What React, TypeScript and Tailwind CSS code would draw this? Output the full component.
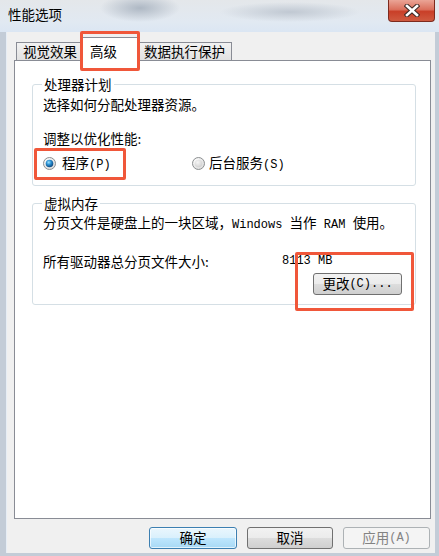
import type { ReactNode } from "react";

const cjk = "font-['Noto_Sans_CJK_SC',sans-serif]";
const Lat = ({ children }: { children: ReactNode }) => (
  <span className="font-['Liberation_Mono',monospace] text-[12px]">{children}</span>
);

const Radio = ({ checked }: { checked?: boolean }) => (
  <svg width="13" height="13" viewBox="0 0 13 13" className="shrink-0">
    <defs>
      <radialGradient id="ro" cx="0.35" cy="0.3" r="0.8">
        <stop offset="0" stopColor="#ffffff" />
        <stop offset="1" stopColor="#d9d9d9" />
      </radialGradient>
      <radialGradient id="rc" cx="0.4" cy="0.35" r="0.7">
        <stop offset="0" stopColor="#9ee3ff" />
        <stop offset="0.45" stopColor="#2a8ed0" />
        <stop offset="1" stopColor="#0b3f73" />
      </radialGradient>
      <radialGradient id="ru" cx="0.4" cy="0.35" r="0.7">
        <stop offset="0" stopColor="#f6f6f6" />
        <stop offset="1" stopColor="#cfcfcf" />
      </radialGradient>
    </defs>
    <circle cx="6.5" cy="6.5" r="6" fill="url(#ro)" stroke="#8c8f91" />
    <circle cx="6.5" cy="6.5" r="3.8" fill={checked ? "url(#rc)" : "url(#ru)"} />
  </svg>
);

const Btn = ({
  children,
  primary,
  disabled,
  className = "",
}: {
  children: ReactNode;
  primary?: boolean;
  disabled?: boolean;
  className?: string;
}) => {
  let look =
    "border-[#707070] bg-[linear-gradient(#f2f2f2_0%,#ebebeb_50%,#dddddd_51%,#cfcfcf_100%)] text-black";
  if (primary)
    look =
      "border-[#3c7fb1] bg-[linear-gradient(#eaf6fd_0%,#d9f0fc_50%,#bee6fd_51%,#a7d9f5_100%)] text-black shadow-[inset_0_0_0_1px_#ffffffaa]";
  if (disabled) look = "border-[#adb2b5] bg-[#f4f4f4] text-[#838383]";
  return (
    <div
      className={`shrink-0 h-[22px] border rounded-[3px] flex items-center justify-center text-[13.5px] leading-none ${look} ${className}`}
    >
      {children}
    </div>
  );
};

const Tab = ({ children, active }: { children: ReactNode; active?: boolean }) => (
  <div
    className={
      active
        ? "relative z-10 w-[58px] h-[24px] -mb-px -mx-[2px] pl-[7px] bg-white border border-b-0 border-[#898c95] flex items-start pt-[3px] text-[13.5px]"
        : "h-[18px] px-[6px] bg-[linear-gradient(#f2f2f2,#e1e1e1)] border border-b-0 border-[#898c95] flex items-center text-[13.5px] -ml-px first:ml-0"
    }
  >
    {children}
  </div>
);

export default function App() {
  return (
    <div className={`relative w-[439px] h-[556px] bg-[#c3ccd7] flex flex-col text-black ${cjk}`}>
      {/* title bar */}
      <div className="relative h-[32px] shrink-0 bg-[radial-gradient(ellipse_40px_14px_at_140px_8px,#aeb8c4,transparent),radial-gradient(ellipse_70px_10px_at_290px_12px,#c0c8d2,transparent),linear-gradient(#e4e7ea,#e1e9f2_70%,#dbe6f3)] flex items-center pl-[8px]">
        <span className="text-[13.5px] leading-none mt-[-2px]">性能选项</span>
        <div className="absolute right-[4px] top-0 w-[47px] h-[22px] rounded-b-[4px] border border-t-0 border-[#7d2a1d] bg-[linear-gradient(#eaa496_0%,#db705d_45%,#c93f28_55%,#cf5a40_100%)] flex items-center justify-center">
          <svg width="16" height="13" viewBox="0 0 16 13">
            <path d="M3 2 L13 11 M13 2 L3 11" stroke="#3e2a26" strokeWidth="4.6" strokeLinecap="square" />
            <path d="M3 2 L13 11 M13 2 L3 11" stroke="#ffffff" strokeWidth="2.6" strokeLinecap="square" />
          </svg>
        </div>
      </div>

      {/* client */}
      <div className="flex-1 ml-[6px] mr-[4px] mb-[3px] bg-[#f0f0f0] border-l border-[#e6edf5] flex flex-col pl-[7px] pr-[4px] pt-[5px]">
        <div className="h-[23px] flex items-end pl-[2px]">
          <Tab>视觉效果</Tab>
          <Tab active>高级</Tab>
          <Tab>数据执行保护</Tab>
        </div>

        <div className="flex-1 bg-white border border-[#898c95] pl-[17px] pr-[14px] pt-[14px]">
          <fieldset className="border border-[#d5dfe5] rounded-[3px] pl-[10px] pr-[12px] pb-[11px]">
            <legend className="-ml-[1px] px-[2px] text-[13.5px] leading-[18px]">处理器计划</legend>
            <div className="mt-[2px] text-[13.5px] leading-[18px]">选择如何分配处理器资源。</div>
            <div className="mt-[16px] text-[13.5px] leading-[18px]">调整以优化性能:</div>
            <div className="mt-[6px] flex items-center text-[13.5px] leading-[18px]">
              <div className="w-[149px] flex items-center gap-[6px]">
                <Radio checked />
                <span>
                  程序<Lat>(P)</Lat>
                </span>
              </div>
              <div className="flex items-center gap-[4px]">
                <Radio />
                <span>
                  后台服务<Lat>(S)</Lat>
                </span>
              </div>
            </div>
          </fieldset>

          <fieldset className="mt-[8px] border border-[#d5dfe5] rounded-[3px] pl-[10px] pr-[13px] pb-[9px]">
            <legend className="-ml-[1px] px-[2px] text-[13.5px] leading-[18px]">虚拟内存</legend>
            <div className="mt-[1px] text-[13.5px] leading-[18px] whitespace-nowrap">
              分页文件是硬盘上的一块区域，<Lat>Windows </Lat>当作<Lat> RAM </Lat>使用。
            </div>
            <div className="mt-[18px] flex text-[13.5px] leading-[18px]">
              <span className="w-[239px]">所有驱动器总分页文件大小:</span>
              <Lat>8113 MB</Lat>
            </div>
            <div className="mt-[3px] flex justify-end">
              <Btn className="w-[89px]">
                更改<Lat>(C)...</Lat>
              </Btn>
            </div>
          </fieldset>
        </div>

        <div className="h-[34px] shrink-0 flex justify-end items-start pt-[8px] pr-[1px] gap-[10px]">
          <Btn primary className="w-[88px]">确定</Btn>
          <Btn className="w-[86px]">取消</Btn>
          <Btn disabled className="w-[87px]">
            应用<Lat>(A)</Lat>
          </Btn>
        </div>
      </div>

      {/* red annotation boxes */}
      <div className="absolute left-[80px] top-[31px] w-[60px] h-[40px] border-[3px] border-[#f0573a] rounded-[2px] z-20" />
      <div className="absolute left-[34px] top-[148px] w-[92px] h-[32px] border-[3px] border-[#f0573a] rounded-[2px] z-20" />
      <div className="absolute left-[295px] top-[252px] w-[119px] h-[59px] border-[3px] border-[#f0573a] rounded-[2px] z-20" />
    </div>
  );
}
